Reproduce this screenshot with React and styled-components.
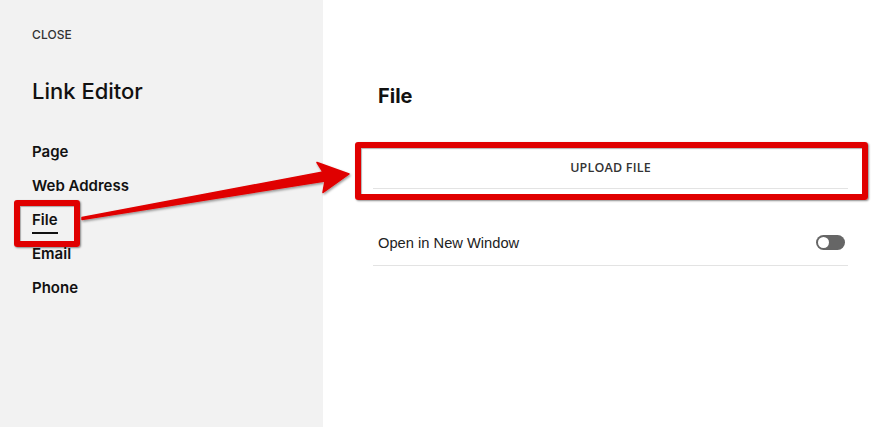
import React from 'react';
import styled, { createGlobalStyle } from 'styled-components';

const GlobalStyle = createGlobalStyle`
  html, body, #root {
    margin: 0;
    height: 100%;
  }
  body {
    font-family: Inter, "Noto Sans", sans-serif;
    color: #111;
    background: #fff;
  }
`

const Page = styled.div`
  position: relative;
  display: flex;
  width: 896px;
  height: 427px;
  overflow: hidden;
`
const Sidebar = styled.aside`
  width: 323px;
  flex-shrink: 0;
  background: #f2f2f2;
  padding: 28px 0 0 32px;
  box-sizing: border-box;
`
const Close = styled.div`
  font-size: 12px;
  font-weight: 500;
  letter-spacing: 0.1px;
  color: #333;
  line-height: 14px;
`
const SideTitle = styled.h1`
  margin: 36px 0 0;
  font-size: 22px;
  font-weight: 500;
  line-height: 26px;
  color: #111;
`
const Nav = styled.nav`
  display: flex;
  flex-direction: column;
  align-items: flex-start;
  margin-top: 31px;
`
const NavItem = styled.div`
  position: relative;
  font-size: 15px;
  font-weight: 600;
  line-height: 34px;
  color: #111;
  &::after {
    content: '';
    display: ${(p) => (p.active ? 'block' : 'none')};
    position: absolute;
    left: 0;
    right: 0;
    bottom: 3px;
    height: 2px;
    background: #111;
  }
`
const Main = styled.main`
  flex: 1;
  padding: 84px 0 0 50px;
  box-sizing: border-box;
`
const Panel = styled.div`
  width: 475px;
`
const Heading = styled.h2`
  margin: 0 0 0 5px;
  font-size: 20px;
  font-weight: 700;
  line-height: 24px;
  color: #111;
`
const UploadRow = styled.div`
  position: relative;
  margin-top: 40px;
  height: 38px;
  padding-bottom: 2px;
  display: flex;
  align-items: center;
  justify-content: center;
  border-bottom: 1px solid #e3e3e3;
  font-family: "Open Sans", sans-serif;
  font-size: 12.5px;
  font-weight: 600;
  letter-spacing: 0.2px;
  color: #333;
`
const OptionRow = styled.div`
  display: flex;
  align-items: center;
  justify-content: space-between;
  height: 77px;
  padding: 31px 3px 0 5px;
  border-bottom: 1px solid #e3e3e3;
  box-sizing: border-box;
  font-family: "Liberation Sans", Arial, sans-serif;
  font-size: 14.7px;
  color: #222;
`
const Toggle = styled.div`
  position: relative;
  width: 29px;
  height: 15px;
  border-radius: 8px;
  background: #666;
  &::before {
    content: '';
    position: absolute;
    left: 2px;
    top: 2px;
    width: 11px;
    height: 11px;
    border-radius: 50%;
    background: #fff;
  }
`
const Highlight = styled.div`
  position: absolute;
  top: ${(p) => p.top}px;
  left: ${(p) => p.left}px;
  right: ${(p) => p.right}px;
  bottom: ${(p) => p.bottom}px;
  border: 6px solid #e00000;
  border-radius: 3px;
  box-shadow: 1px 1px 2px rgba(0, 0, 0, 0.45), inset 1px 1px 1px rgba(0, 0, 0, 0.3);
  pointer-events: none;
`
const Arrow = styled.svg`
  position: absolute;
  left: 0;
  top: 0;
  pointer-events: none;
`

export default function App() {
  return (
    <>
      <GlobalStyle />
      <Page>
        <Sidebar>
          <Close>CLOSE</Close>
          <SideTitle>Link Editor</SideTitle>
          <Nav>
            <NavItem>Page</NavItem>
            <NavItem>Web Address</NavItem>
            <NavItem active>
              File
              <Highlight top={-3} left={-18} right={-22} bottom={-10} />
            </NavItem>
            <NavItem>Email</NavItem>
            <NavItem>Phone</NavItem>
          </Nav>
        </Sidebar>
        <Main>
          <Panel>
            <Heading>File</Heading>
            <UploadRow>
              UPLOAD FILE
              <Highlight top={-6} left={-18} right={-20} bottom={-12} />
            </UploadRow>
            <OptionRow>
              <span>Open in New Window</span>
              <Toggle />
            </OptionRow>
          </Panel>
        </Main>
        <Arrow width="896" height="427" viewBox="0 0 896 427">
          <defs>
            <filter id="sh" x="-10%" y="-10%" width="120%" height="130%">
              <feDropShadow dx="1" dy="1.5" stdDeviation="1" floodColor="#000" floodOpacity="0.4" />
            </filter>
          </defs>
          <polygon
            points="82,217.5 323,172 317,162.5 349,174 323,192.5 325,181 82,219.5"
            fill="#e00000"
            stroke="#e00000"
            strokeWidth="1.5"
            strokeLinejoin="round"
            filter="url(#sh)"
          />
        </Arrow>
      </Page>
    </>
  );
}
